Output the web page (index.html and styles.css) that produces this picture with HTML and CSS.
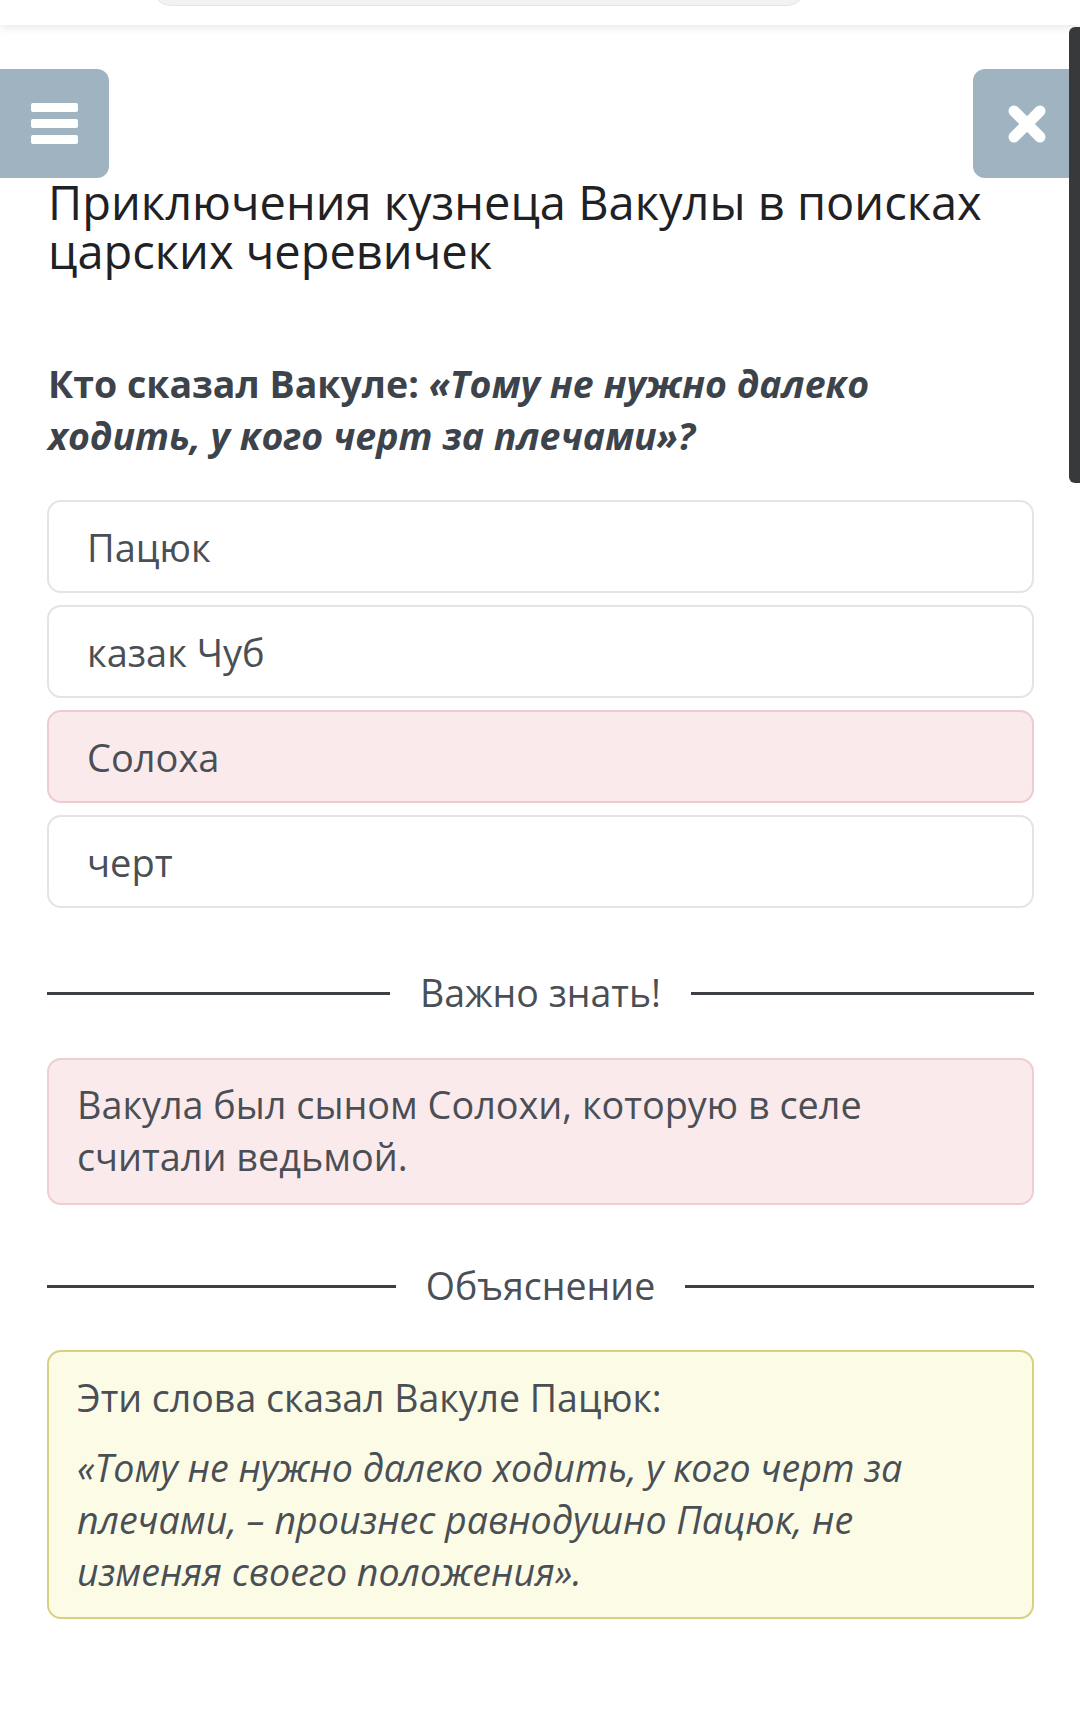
FILE: index.html
```html
<!DOCTYPE html>
<html lang="ru">
<head>
<meta charset="utf-8">
<title>Приключения кузнеца Вакулы</title>
<link rel="stylesheet" href="styles.css">
</head>
<body>
<header class="topbar">
  <div class="search-pill"></div>
</header>
<div class="scrollbar"></div>
<main class="page">
  <div class="nav-row">
    <button class="nav-btn nav-menu" aria-label="Меню">
      <span class="bar"></span><span class="bar"></span><span class="bar"></span>
    </button>
    <button class="nav-btn nav-close" aria-label="Закрыть">
      <svg width="40" height="40" viewBox="0 0 40 40"><path d="M7 7 L33 33 M33 7 L7 33" stroke="#fff" stroke-width="11" stroke-linecap="round" fill="none"/></svg>
    </button>
  </div>
  <section class="content">
    <h1 class="title">Приключения кузнеца Вакулы в поисках царских черевичек</h1>
    <p class="question">Кто сказал Вакуле: <em>«Тому не нужно далеко ходить, у кого черт за плечами»?</em></p>
    <ul class="options">
      <li class="option">Пацюк</li>
      <li class="option">казак Чуб</li>
      <li class="option option-wrong">Солоха</li>
      <li class="option">черт</li>
    </ul>
    <div class="divider"><span class="divider-line"></span><span class="divider-text">Важно знать!</span><span class="divider-line"></span></div>
    <div class="note note-pink">
      <p>Вакула был сыном Солохи, которую в селе считали ведьмой.</p>
    </div>
    <div class="divider divider-expl"><span class="divider-line"></span><span class="divider-text">Объяснение</span><span class="divider-line"></span></div>
    <div class="note note-yellow">
      <p class="lead">Эти слова сказал Вакуле Пацюк:</p>
      <p class="quote">«Тому не нужно далеко ходить, у кого черт за плечами, – произнес равнодушно Пацюк, не изменяя своего положения».</p>
    </div>
  </section>
</main>
</body>
</html>
```
FILE: styles.css
```css
html, body {
  margin: 0;
  padding: 0;
  background: #ffffff;
}
body {
  font-family: "Open Sans", "Noto Sans", sans-serif;
  color: #4a4f55;
  overflow: hidden;
  position: relative;
  width: 1080px;
  min-height: 1722px;
}
.topbar {
  height: 25px;
  background: #fff;
  box-shadow: 0 3px 8px rgba(0,0,0,0.09);
  overflow: hidden;
  position: relative;
  z-index: 2;
}
.search-pill {
  margin: -34px 0 0 152px;
  width: 652px;
  height: 38px;
  border-radius: 19px;
  background: #f2f2f2;
  border: 1px solid #e6e6e6;
}
.scrollbar {
  position: absolute;
  top: 27px;
  right: 0;
  width: 11px;
  height: 456px;
  background: #38393b;
  border-radius: 6px 0 0 6px;
  z-index: 3;
}
.page {
  padding-top: 44px;
}
.nav-row {
  display: flex;
  justify-content: space-between;
  height: 109px;
}
.nav-btn {
  border: none;
  padding: 0;
  margin: 0;
  background: #9fb3c0;
  height: 109px;
  display: flex;
  align-items: center;
  justify-content: center;
}
.nav-menu {
  width: 109px;
  border-radius: 0 12px 12px 0;
  flex-direction: column;
  gap: 7px;
}
.bar {
  display: block;
  width: 47px;
  height: 9px;
  border-radius: 2px;
  background: #fff;
}
.nav-close {
  width: 107px;
  border-radius: 12px 0 0 12px;
}
.content {
  padding: 0 46px 0 47px;
}
.title {
  margin: 0;
  padding-left: 1px;
  font-size: 47px;
  line-height: 49px;
  font-weight: 400;
  color: #1f2124;
}
.question {
  margin: 82px 0 0 0;
  padding-left: 1px;
  font-size: 37.5px;
  line-height: 52px;
  font-weight: 700;
  color: #3d434b;
  width: 900px;
}
.question em {
  font-style: italic;
}
.options {
  list-style: none;
  margin: 38px 0 0 0;
  padding: 0;
  display: flex;
  flex-direction: column;
  gap: 12px;
}
.option {
  height: 93px;
  box-sizing: border-box;
  border: 2px solid #e3e4e5;
  border-radius: 14px;
  padding-left: 38px;
  display: flex;
  align-items: center;
  font-size: 38px;
  color: #4a4f55;
  background: #fff;
}
.option-wrong {
  background: #fbeaec;
  border-color: #eecbcf;
}
.divider {
  display: flex;
  align-items: center;
  gap: 30px;
  margin-top: 60px;
  height: 50px;
}
.divider-expl {
  margin-top: 56px;
}
.divider-line {
  flex: 1;
  height: 3px;
  background: #3c4045;
}
.divider-text {
  font-size: 37.5px;
  line-height: 50px;
  color: #4a4f55;
}
.note {
  border: 2px solid;
  border-radius: 14px;
  padding: 19px 60px 20px 28px;
  font-size: 37.8px;
  line-height: 52px;
  color: #4a4f55;
}
.note p {
  margin: 0;
}
.note-pink {
  margin-top: 40px;
  background: #fbeaec;
  border-color: #efcdd0;
}
.note-yellow {
  margin-top: 39px;
  background: #fcfce6;
  border-color: #d7d17f;
  padding-top: 20px;
  padding-bottom: 19px;
}
.note-yellow .lead {
  font-size: 37.5px;
}
.note-yellow .quote {
  margin-top: 18px;
  font-style: italic;
  font-size: 37.6px;
}
```
